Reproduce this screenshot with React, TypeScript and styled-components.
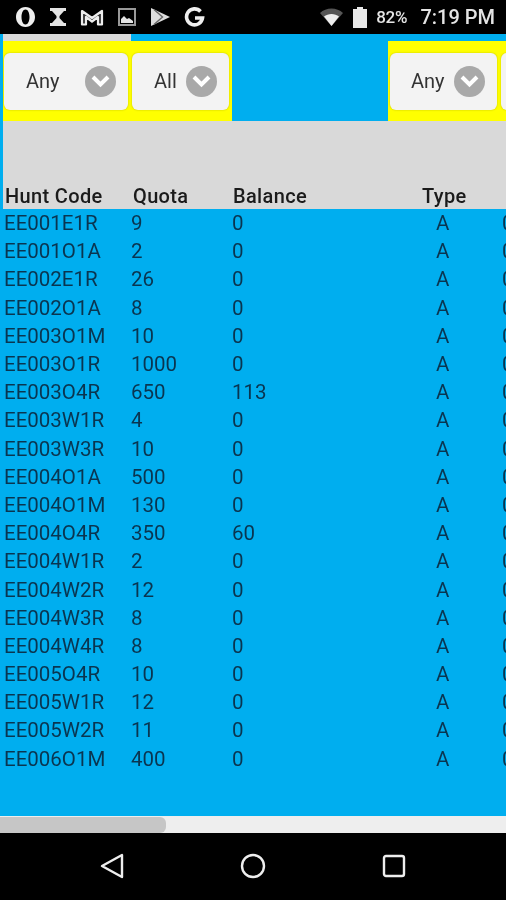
import React from 'react';
import styled, { createGlobalStyle } from 'styled-components';

const GlobalStyle = createGlobalStyle`
  html, body {
    margin: 0;
    padding: 0;
    background: #000;
  }
  * {
    box-sizing: border-box;
  }
`;

const Page = styled.div`
  width: 506px;
  height: 900px;
  display: flex;
  flex-direction: column;
  overflow: hidden;
  font-family: Roboto, "Liberation Sans", sans-serif;
  filter: blur(0.5px);
`;

const StatusBar = styled.div`
  height: 34px;
  flex: none;
  background: #000;
  color: #e4e4e4;
  display: flex;
  align-items: center;
  justify-content: space-between;
  padding: 0 11px 0 15px;
`;

const StatusGroup = styled.div`
  display: flex;
  align-items: center;
`;

const NotifyIcons = styled(StatusGroup)`
  gap: 14px;
`;

const SystemIcons = styled(StatusGroup)`
  gap: 9px;
`;

const Battery = styled.span`
  font-size: 17px;
  font-weight: 500;
  letter-spacing: -0.2px;
`;

const Clock = styled.span`
  font-size: 20px;
  font-weight: 500;
  margin-left: 4px;
`;

const Content = styled.div`
  flex: 1;
  min-height: 0;
  background: #00aeef;
  overflow: hidden;
`;

const CutTab = styled.div`
  width: 128px;
  height: 7px;
  margin-left: 3px;
  padding-left: 4px;
  background: #d9d9d9;
  overflow: hidden;
  color: #222;
  font-size: 18px;
  font-weight: 500;
  line-height: 18px;
`;

const CutLabel = styled.div`
  margin-top: -16px;
`;

const FilterRow = styled.div`
  height: 80px;
  margin-left: 3px;
  display: flex;
  gap: 156px;
`;

const FilterGroup = styled.div<{ $width: number; $pad: number }>`
  flex: none;
  width: ${({ $width }) => $width}px;
  height: 80px;
  background: #ffff00;
  display: flex;
  align-items: center;
  gap: 4px;
  padding: 0 2px 0 ${({ $pad }) => $pad}px;
`;

const Select = styled.div<{ $width: number; $inset: number }>`
  flex: none;
  width: ${({ $width }) => $width}px;
  height: 57px;
  background: #f3f3f3;
  border-radius: 6px;
  box-shadow: 0 0 2px rgba(0, 0, 0, 0.25);
  display: flex;
  align-items: center;
  justify-content: space-between;
  padding: 0 12px 0 ${({ $inset }) => $inset}px;
  color: #333;
  font-size: 20px;
`;

const SelectArrow = styled.span`
  width: 31px;
  height: 31px;
  border-radius: 50%;
  background: #a9a9a9;
  display: flex;
  align-items: center;
  justify-content: center;
`;

const HeaderBand = styled.div`
  height: 88px;
  margin-left: 3px;
  background: #d9d9d9;
  display: flex;
  align-items: flex-end;
`;

const HeaderRow = styled.div`
  width: 620px;
  height: 27px;
  padding-left: 2px;
  display: grid;
  grid-template-columns: 128px 100px 189px 80px 120px;
  align-items: center;
  color: #1b1b1b;
  font-size: 20px;
  font-weight: 500;
  letter-spacing: 0.35px;
`;

const Rows = styled.div`
  padding-left: 4px;
`;

const DataRow = styled.div`
  width: 620px;
  height: 28.2px;
  display: grid;
  grid-template-columns: 127px 101px 190px 80px 120px;
  align-items: center;
  color: #0a3550;
  font-size: 20.5px;
`;

const TypeCell = styled.span`
  padding-left: 14px;
`;

const ScrollTrack = styled.div`
  height: 17px;
  flex: none;
  background: #eeeeee;
  display: flex;
  align-items: center;
`;

const ScrollThumb = styled.div`
  width: 166px;
  height: 16px;
  border-radius: 0 6px 6px 0;
  background: #c6c6c6;
`;

const NavBar = styled.div`
  height: 67px;
  flex: none;
  background: #000;
  display: flex;
  align-items: flex-start;
  justify-content: center;
  gap: 115px;
  padding-top: 20px;
`;

const rows: [string, string, string][] = [
  ['EE001E1R', '9', '0'],
  ['EE001O1A', '2', '0'],
  ['EE002E1R', '26', '0'],
  ['EE002O1A', '8', '0'],
  ['EE003O1M', '10', '0'],
  ['EE003O1R', '1000', '0'],
  ['EE003O4R', '650', '113'],
  ['EE003W1R', '4', '0'],
  ['EE003W3R', '10', '0'],
  ['EE004O1A', '500', '0'],
  ['EE004O1M', '130', '0'],
  ['EE004O4R', '350', '60'],
  ['EE004W1R', '2', '0'],
  ['EE004W2R', '12', '0'],
  ['EE004W3R', '8', '0'],
  ['EE004W4R', '8', '0'],
  ['EE005O4R', '10', '0'],
  ['EE005W1R', '12', '0'],
  ['EE005W2R', '11', '0'],
  ['EE006O1M', '400', '0'],
];

const Chevron = () => (
  <SelectArrow>
    <svg width="21" height="14" viewBox="0 0 21 14">
      <path d="M3 3 L10.5 10.5 L18 3" fill="none" stroke="#fff" strokeWidth="4" />
    </svg>
  </SelectArrow>
);

const FilterSelect = ({ label, width, inset }: { label: string; width: number; inset: number }) => (
  <Select $width={width} $inset={inset}>
    <span>{label}</span>
    <Chevron />
  </Select>
);

const NotifyIconSet = () => (
  <NotifyIcons>
    <svg width="21" height="22" viewBox="0 0 21 22">
      <path
        fillRule="evenodd"
        d="M10.5 1C16 1 20 5.5 20 11S16 21 10.5 21S1 16.5 1 11S5 1 10.5 1ZM10.5 3.5C8 3.5 6.5 7 6.5 11S8 18.5 10.5 18.5S14.5 15 14.5 11S13 3.5 10.5 3.5Z"
        fill="#eeeeee"
      />
    </svg>
    <svg width="16" height="18" viewBox="0 0 16 18">
      <path d="M0 0H16V3H14L9.5 8V10L14 15H16V18H0V15H2L6.5 10V8L2 3H0Z" fill="#e4e4e4" />
    </svg>
    <svg width="24" height="17" viewBox="0 0 24 17">
      <path d="M2 15.5V2L12 9L22 2V15.5H18V8L12 12.5L6 8V15.5Z" fill="#333" stroke="#eeeeee" strokeWidth="2.2" strokeLinejoin="round" />
    </svg>
    <svg width="18" height="18" viewBox="0 0 18 18">
      <rect x="1" y="1" width="16" height="16" fill="none" stroke="#999" strokeWidth="2" />
      <path d="M3 15V11L6 8L9 11L11 10L15 13V15Z" fill="#e4e4e4" />
    </svg>
    <svg width="20" height="18" viewBox="0 0 20 18">
      <path d="M1 0L20 9L1 18Z" fill="#dddddd" />
      <path d="M4 1.5L12.5 9L4 16.5" fill="none" stroke="#666" strokeWidth="1.4" />
    </svg>
    <svg width="21" height="20" viewBox="0 0 21 20">
      <path d="M16.5 4.5A8 8 0 1 0 18.5 11H11" fill="none" stroke="#eeeeee" strokeWidth="3.6" />
    </svg>
  </NotifyIcons>
);

const SystemIconSet = () => (
  <SystemIcons>
    <svg width="25" height="18" viewBox="0 0 25 18">
      <path d="M1 5C7 -1 18 -1 24 5L12.5 18Z" fill="#555" />
      <path d="M5 8.5C9 5 16 5 20 8.5L12.5 18Z" fill="#eeeeee" />
    </svg>
    <svg width="14" height="21" viewBox="0 0 14 21">
      <path d="M4 2V0H10V2H14V21H0V2Z" fill="#e8e8e8" />
    </svg>
    <Battery>82%</Battery>
    <Clock>7:19 PM</Clock>
  </SystemIcons>
);

const App: React.FC = () => {
  return (
    <Page>
      <GlobalStyle />
      <StatusBar>
        <NotifyIconSet />
        <SystemIconSet />
      </StatusBar>

      <Content>
        <CutTab>
          <CutLabel>Units</CutLabel>
        </CutTab>

        <FilterRow>
          <FilterGroup $width={229} $pad={1}>
            <FilterSelect label="Any" width={124} inset={22} />
            <FilterSelect label="All" width={97} inset={22} />
          </FilterGroup>
          <FilterGroup $width={125} $pad={2}>
            <FilterSelect label="Any" width={107} inset={21} />
            <FilterSelect label="" width={60} inset={10} />
          </FilterGroup>
        </FilterRow>

        <HeaderBand>
          <HeaderRow>
            <span>Hunt Code</span>
            <span>Quota</span>
            <span>Balance</span>
            <span>Type</span>
          </HeaderRow>
        </HeaderBand>

        <Rows>
          {rows.map(([code, quota, balance]) => (
            <DataRow key={code}>
              <span>{code}</span>
              <span>{quota}</span>
              <span>{balance}</span>
              <TypeCell>A</TypeCell>
              <span>0</span>
            </DataRow>
          ))}
        </Rows>
      </Content>

      <ScrollTrack>
        <ScrollThumb />
      </ScrollTrack>

      <NavBar>
        <svg width="26" height="26" viewBox="0 0 26 26">
          <path d="M23 2V24L3 13Z" fill="none" stroke="#eeeeee" strokeWidth="2.4" strokeLinejoin="round" />
        </svg>
        <svg width="26" height="26" viewBox="0 0 26 26">
          <circle cx="13" cy="13" r="11" fill="none" stroke="#eeeeee" strokeWidth="2.4" />
        </svg>
        <svg width="26" height="26" viewBox="0 0 26 26">
          <rect x="3" y="3" width="20" height="20" rx="2" fill="none" stroke="#eeeeee" strokeWidth="2.4" />
        </svg>
      </NavBar>
    </Page>
  );
};

export default App;
